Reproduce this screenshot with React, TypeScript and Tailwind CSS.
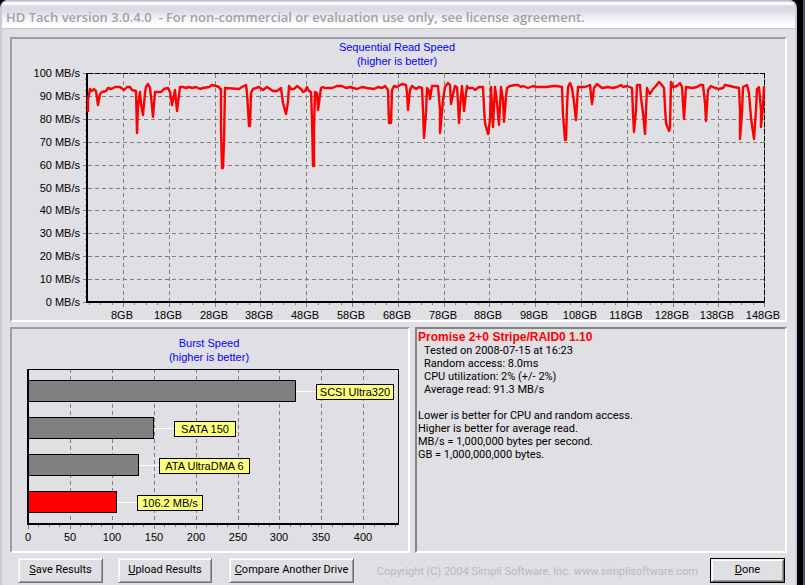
import type { ReactNode } from "react";

const READ_TRACE =
  "88,112 88,100 90,89 92,91 94,89 96,91 98,105 100,94 102,92 106,91 108,88 111,89 115,87 120,87 124,90 127,87 130,87 132,90 136,91 137,133 138,106 140,92 141,104 143,115 145,93 146,87 148,84 150,88 151,97 153,117 155,92 161,92 164,89 168,88 170,92 172,105 175,90 177,111 180,87 183,87 186,88 189,87 192,88 196,87 200,89 203,88 209,87 212,85 216,86 219,87 220,89 221,89 221,130 222,168 223,168 224,141 225,88 239,89 242,87 246,85 247,93 249,126 250,126 251,93 253,89 259,87 263,90 267,87 273,91 277,91 281,88 283,103 286,114 288,102 289,86 291,89 294,89 297,86 301,89 303,92 305,91 307,87 309,91 311,92 312,120 313,166 314,166 314,130 315,92 317,93 318,110 321,88 323,87 325,88 332,88 337,86 342,86 346,88 350,87 357,89 362,87 367,88 374,89 378,87 382,88 385,86 388,90 389,123 391,123 392,90 394,86 397,87 402,84 406,85 407,93 408,110 410,90 412,86 416,89 419,87 422,88 423,110 424,138 426,113 427,88 429,91 430,99 432,86 438,86 440,110 440,133 441,123 443,100 445,87 448,83 450,85 451,104 454,90 455,86 457,87 458,103 459,123 460,107 462,86 463,97 464,111 466,93 467,86 468,88 473,88 475,90 479,87 483,87 484,107 485,123 488,134 490,120 491,87 492,107 493,127 495,87 497,103 499,125 501,87 503,100 504,122 506,97 507,88 510,86 515,85 518,85 521,87 523,86 528,88 533,86 537,87 547,87 553,86 557,86 562,87 563,115 565,140 566,140 567,107 568,87 570,83 572,88 574,102 576,120 577,103 578,87 585,87 590,85 592,104 594,88 597,84 602,88 608,87 613,88 617,87 621,85 623,87 627,86 632,88 633,113 634,132 636,110 637,85 640,85 641,98 643,113 645,134 647,88 648,91 650,94 653,89 655,87 659,82 661,84 664,88 665,107 666,123 669,131 670,127 671,82 673,87 677,86 680,83 682,87 684,119 686,87 692,88 697,87 700,85 703,85 705,103 706,121 708,90 711,86 715,88 719,89 723,88 725,85 730,86 734,87 739,88 740,110 740,139 742,113 743,87 747,85 749,93 751,118 754,139 756,110 757,89 759,87 761,110 761,127 763,107 764,86";

const bars = [
  { label: "SCSI Ultra320", y: 380, end: 296, boxX: 316, boxW: 78, fill: "#808080" },
  { label: "SATA 150", y: 417, end: 154, boxX: 174, boxW: 62, fill: "#808080" },
  { label: "ATA UltraDMA 6", y: 454, end: 139, boxX: 159, boxW: 91, fill: "#808080" },
  { label: "106.2 MB/s", y: 491, end: 117, boxX: 137, boxW: 66, fill: "#ff0000" },
];

const range = (n: number) => Array.from({ length: n }, (_, i) => i);

function ReadChart() {
  const xs = range(15).map((i) => Math.round(123 + i * 45.8));
  const ys = range(11).map((i) => Math.round(73 + i * 22.9));
  return (
    <svg viewBox="12 39 773 281" className="block w-full font-['Liberation_Sans',Arial,sans-serif] text-[11px]" role="img" aria-label="Sequential read speed">
      <text x="397" y="51" textAnchor="middle" fill="#0000ff">Sequential Read Speed</text>
      <text x="397" y="65" textAnchor="middle" fill="#0000ff">(higher is better)</text>

      {/* grid */}
      <g stroke="#808080" strokeDasharray="4 3" shapeRendering="crispEdges">
        {ys.slice(1, 10).map((y) => <path key={y} d={`M88 ${y + 0.5}H764`} />)}
        {xs.slice(0, 14).map((x) => <path key={x} d={`M${x + 0.5} 74V301`} />)}
      </g>

      {/* frame and ticks */}
      <g stroke="#808080" shapeRendering="crispEdges">
        {ys.map((y) => <path key={y} d={`M83 ${y + 0.5}H87`} />)}
        {range(40).map((i) => <path key={i} d={`M85 ${Math.round(73 + i * 5.725) + 0.5}H87`} />)}
        {xs.map((x) => <path key={x} d={`M${x + 0.5} 303V307`} />)}
        {range(60).map((i) => <path key={i} d={`M${Math.round(88.6 + i * 11.45) + 0.5} 303V305`} />)}
        <path d="M88 73.5H764M764.5 73V302" />
      </g>
      <path d="M88 73.5H764M764.5 73V302" stroke="#000" strokeDasharray="5 2" shapeRendering="crispEdges" />
      <path d="M87 73V302H765" fill="none" stroke="#000" strokeWidth="2" shapeRendering="crispEdges" />

      <polyline points={READ_TRACE} fill="none" stroke="#ff0000" strokeWidth="2.4" strokeLinejoin="round" />

      {ys.map((y, i) => (
        <text key={y} x="80" y={y + 4} textAnchor="end">{100 - i * 10} MB/s</text>
      ))}
      {xs.map((x, i) => (
        <text key={x} x={x - 1} y="319" textAnchor="middle">{8 + i * 10}GB</text>
      ))}
    </svg>
  );
}

function BurstChart() {
  const xs = range(9).map((i) => Math.round(28 + i * 41.9));
  return (
    <svg viewBox="12 329 396 222" className="block w-full font-['Liberation_Sans',Arial,sans-serif] text-[11px]" role="img" aria-label="Burst speed">
      <text x="209" y="347" textAnchor="middle" fill="#0000ff">Burst Speed</text>
      <text x="209" y="361" textAnchor="middle" fill="#0000ff">(higher is better)</text>

      <g shapeRendering="crispEdges">
        <g stroke="#808080">
          {xs.slice(1).map((x) => <path key={x} d={`M${x + 0.5} 369V523`} strokeDasharray="4 3" />)}
          {xs.map((x) => <path key={x} d={`M${x + 0.5} 525V529`} />)}
          {range(36).map((i) => <path key={i} d={`M${Math.round(28 + i * 10.475) + 0.5} 525V527`} />)}
        </g>
        <path d="M28 369.5H398.5V524" fill="none" stroke="#000" />
        {bars.map((b) => (
          <g key={b.label}>
            <rect x="28.5" y={b.y + 0.5} width={b.end - 29} height="21" fill={b.fill} stroke="#000" />
            <path d={`M${b.end} ${b.y + 11.5}H${b.boxX}`} stroke="#fff" />
            <rect x={b.boxX + 0.5} y={b.y + 4.5} width={b.boxW - 1} height="15" fill="#ffff80" stroke="#000" />
          </g>
        ))}
        <path d="M28 369V524H399" fill="none" stroke="#000" strokeWidth="2" />
      </g>

      {bars.map((b) => (
        <text key={b.label} x={b.boxX + b.boxW / 2} y={b.y + 16} textAnchor="middle">{b.label}</text>
      ))}
      {xs.map((x, i) => (
        <text key={x} x={x} y="541" textAnchor="middle">{i * 50}</text>
      ))}
    </svg>
  );
}

function Panel({ children }: { children: ReactNode }) {
  return (
    <section className="border-2 border-t-[#9d9da1] border-l-[#9d9da1] border-r-white border-b-white">
      {children}
    </section>
  );
}

function PushButton({ label, className }: { label: string; className: string }) {
  return (
    <button
      type="button"
      className={`whitespace-nowrap border border-t-[#f1f0f4] border-l-[#f1f0f4] border-r-[#716f64] border-b-[#716f64] shadow-[inset_1px_1px_0_#fffff4,inset_-1px_-1px_0_#9d9da1] ${className}`}
    >
      <span className="underline underline-offset-1">{label[0]}</span>{label.slice(1)}
    </button>
  );
}

export default function App() {
  return (
    <div className="flex min-h-screen bg-black font-[Roboto,Arial,sans-serif] text-[11px] text-black">
      <main className="flex min-w-0 flex-1 flex-col rounded-t-lg border-l-2 border-r-2 border-l-[#cbcadb] border-r-[#cbcadb] bg-[#e0dfe3]">
        {/* Title bar */}
        <header className="flex h-[29px] items-center rounded-t-md border-t border-b border-t-[#b9b8c8] border-b-[#c8c7da] bg-[linear-gradient(#d0cfdc_0px,#fff_2px,#fff_3px,#d9d8e4_5px,#dddce6_10px,#f4f4f7_18px,#fff_25px)] pt-1 pl-1">
          <h1 className="whitespace-pre font-['Open_Sans',sans-serif] text-[13px] leading-4 font-semibold text-[#a2a1a1]">
            {"HD Tach version 3.0.4.0  - For non-commercial or evaluation use only, see license agreement."}
          </h1>
        </header>

        <div className="flex flex-col gap-[5px] px-2 pt-2">
          <Panel><ReadChart /></Panel>

          <div className="grid grid-cols-[400fr_372fr] gap-[5px]">
            <Panel><BurstChart /></Panel>

            <section className="border-2 border-t-[#85847e] border-l-[#85847e] border-r-[#fffff8] border-b-[#fffff8] pt-0.5 pl-px leading-[13px]">
              <h2 className="font-['Liberation_Sans',Arial,sans-serif] text-[12px] font-bold text-[#ff0000]">Promise 2+0 Stripe/RAID0 1.10</h2>
              <ul className="pl-1.5">
                <li>Tested on 2008-07-15 at 16:23</li>
                <li>Random access: 8.0ms</li>
                <li>CPU utilization: 2% (+/- 2%)</li>
                <li>Average read: 91.3 MB/s</li>
              </ul>
              <p className="pt-[13px]">
                Lower is better for CPU and random access.<br />
                Higher is better for average read.<br />
                MB/s = 1,000,000 bytes per second.<br />
                GB = 1,000,000,000 bytes.
              </p>
            </section>
          </div>

          <footer className="flex items-center pr-0.5 pl-2">
            <PushButton label="Save Results" className="h-[25px] w-[85px]" />
            <PushButton label="Upload Results" className="ml-[15px] h-[25px] w-[94px]" />
            <PushButton label="Compare Another Drive" className="ml-[17px] h-[25px] w-[125px]" />
            <p className="mr-3 ml-auto pt-1 whitespace-nowrap text-[#b9b8ba]">
              Copyright (C) 2004 Simpli Software, Inc. www.simplisoftware.com
            </p>
            <div className="border border-black">
              <PushButton label="Done" className="block h-[23px] w-[73px]" />
            </div>
          </footer>
        </div>
      </main>
      <div className="w-2 border-r-2 border-r-[#4c566b]" />
    </div>
  );
}
